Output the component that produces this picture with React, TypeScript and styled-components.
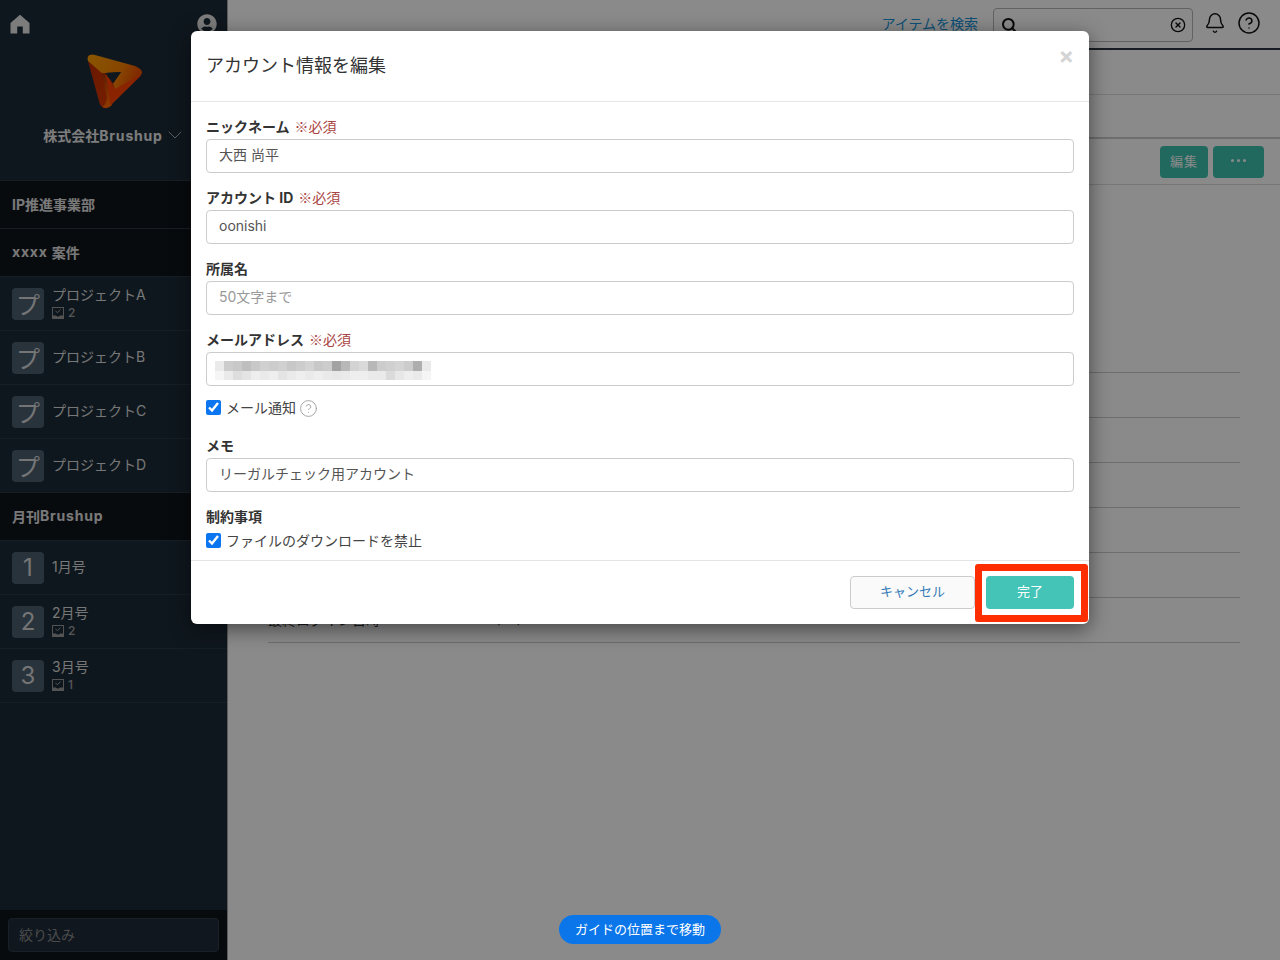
import React from "react";
import styled, { createGlobalStyle } from "styled-components";
import { Bell, CircleHelp, Search, CircleX, ChevronDown } from "lucide-react";
import { FaUserCircle } from "react-icons/fa";

const Global = createGlobalStyle`
  html, body { margin: 0; padding: 0; background: #fff; }
  body { font-family: Inter, "Noto Sans CJK JP", sans-serif; font-size: 14px; color: #333; }
  * { box-sizing: border-box; }
`;

const Page = styled.div`
  position: relative;
  display: grid;
  grid-template-columns: 227px 1fr;
  width: 1280px;
  height: 960px;
  overflow: hidden;
  background: #fff;
`;

const Sidebar = styled.aside`
  display: flex;
  flex-direction: column;
  height: 960px;
  background: #1d2c39;
  color: #ececec;
`;

const Company = styled.div`
  height: 180px;
  display: flex;
  flex-direction: column;
  align-items: center;
  flex: none;
`;

const TopIcons = styled.div`
  width: 100%;
  height: 48px;
  display: flex;
  align-items: center;
  justify-content: space-between;
  padding: 0 10px;
  color: #e6e6e6;
`;

const LogoSvg = styled.svg`
  flex: none;
  margin: 6px 0 0 3px;
`;

const CompanyName = styled.div`
  margin-top: 13px;
  padding-left: 3px;
  height: 24px;
  display: flex;
  align-items: center;
  font-size: 14px;
  font-weight: 700;
  color: #e8e8e8;
`;

const Latin = styled.span`
  letter-spacing: 0.8px;
`;

const Group = styled.div`
  height: 48px;
  flex: none;
  display: flex;
  align-items: center;
  padding: 0 12px 2px;
  background: #10151b;
  border-top: 1px solid #2c3a46;
  font-size: 14px;
  font-weight: 700;
  color: #e0e0e0;
  white-space: pre;
`;

const Item = styled.div`
  height: 54px;
  flex: none;
  display: flex;
  align-items: center;
  gap: 8px;
  padding: 0 12px;
  border-top: 1px solid #2b3a47;
`;

const Tile = styled.div`
  width: 32px;
  height: 32px;
  flex: none;
  display: flex;
  align-items: center;
  justify-content: center;
  border-radius: 4px;
  background: #4a5f70;
  font-size: 24px;
  color: #d8d8d8;
`;

const ItemText = styled.div`
  display: flex;
  flex-direction: column;
`;

const ItemName = styled.div`
  font-size: 14px;
  line-height: 18px;
  padding-bottom: 2px;
  color: #dcdcdc;
`;

const ItemMeta = styled.div`
  display: flex;
  align-items: center;
  gap: 4px;
  margin-bottom: 2px;
  font-size: 12px;
  font-weight: 500;
  line-height: 14px;
  color: #a0a0a0;
`;

const ListEnd = styled.div`
  border-top: 1px solid #2b3a47;
  flex: 1;
`;

const FilterBar = styled.div`
  height: 50px;
  flex: none;
  padding: 8px;
  background: #10151b;
`;

const Filter = styled.div`
  height: 34px;
  display: flex;
  align-items: center;
  padding: 0 10px 2px;
  border: 1px solid #2f3b47;
  border-radius: 4px;
  background: #1f2c3a;
  color: #8a8a8a;
  font-size: 14px;
`;

const Main = styled.main`
  display: flex;
  flex-direction: column;
  min-width: 0;
  border-left: 1px solid #aaa;
`;

const Header = styled.header`
  height: 50px;
  flex: none;
  display: flex;
  align-items: flex-start;
  justify-content: flex-end;
  padding: 8px 19px 0 0;
  border-bottom: 2px solid #2b3640;
  color: #111;
`;

const SearchLink = styled.a`
  margin: 6px 15px 0 0;
  color: #1593d8;
  font-size: 14px;
  line-height: 20px;
`;

const SearchBox = styled.div`
  width: 200px;
  height: 34px;
  display: flex;
  align-items: center;
  justify-content: space-between;
  padding: 0 6px 0 7px;
  border: 1px solid #b5b5b5;
  border-radius: 4px;
`;

const HeaderIcons = styled.div`
  display: flex;
  align-items: center;
  gap: 11px;
  height: 30px;
  margin-left: 11px;
`;

const Strip = styled.div<{ $h: number; $dark?: boolean }>`
  height: ${(p) => p.$h}px;
  flex: none;
  display: flex;
  align-items: center;
  justify-content: flex-end;
  gap: 5px;
  padding-right: 16px;
  border-bottom: ${(p) => (p.$dark ? "2px solid #ccc" : "1px solid #ddd")};
`;

const TealButton = styled.div<{ $w: number }>`
  width: ${(p) => p.$w}px;
  height: 32px;
  display: flex;
  align-items: center;
  justify-content: center;
  gap: 3px;
  padding-bottom: 2px;
  border-radius: 4px;
  background: #3dc2b0;
  color: #fff;
  font-size: 13px;
  letter-spacing: 1px;
`;

const Dot = styled.span`
  width: 3px;
  height: 3px;
  border-radius: 50%;
  background: #fff;
`;

const Details = styled.div`
  margin: 143px 40px 0 40px;
`;

const DetailRow = styled.div`
  height: 45px;
  display: grid;
  grid-template-columns: 195px 1fr;
  align-items: center;
  padding-bottom: 3px;
  border-bottom: 1px solid #ccc;
  font-size: 14px;
`;

const Backdrop = styled.div`
  position: absolute;
  inset: 0;
  background: rgba(0, 0, 0, 0.46);
`;

const Modal = styled.div`
  position: absolute;
  left: 191px;
  top: 31px;
  width: 898px;
  height: 593px;
  display: flex;
  flex-direction: column;
  border-radius: 6px;
  background: #fff;
  box-shadow: 0 5px 20px rgba(0, 0, 0, 0.5);
`;

const ModalHead = styled.div`
  height: 71px;
  flex: none;
  display: flex;
  align-items: center;
  justify-content: space-between;
  padding: 0 15px;
  border-bottom: 1px solid #e5e5e5;
`;

const ModalTitle = styled.h4`
  margin: 0 0 1px;
  font-size: 18px;
  font-weight: 400;
  line-height: 26px;
  color: #333;
`;

const Close = styled.span`
  margin: 0 0 20px;
  color: #d4d4d4;
  font-size: 23px;
  font-weight: 700;
  line-height: 1;
`;

const ModalBody = styled.div`
  flex: 1;
  padding: 15px 15px 0;
`;

const Field = styled.div`
  margin-bottom: 15px;
`;

const Label = styled.div`
  height: 20px;
  margin-bottom: 2px;
  font-size: 14px;
  font-weight: 700;
  line-height: 19px;
  color: #333;
`;

const Required = styled.span`
  margin-left: 5px;
  font-family: "Noto Sans CJK JP", sans-serif;
  color: #a94442;
  font-weight: 400;
`;

const InputWrap = styled.div`
  position: relative;
`;

const Input = styled.input`
  display: block;
  width: 100%;
  height: 34px;
  padding: 0 12px 4px;
  border: 1px solid #ccc;
  border-radius: 4px;
  background: #fff;
  color: #555;
  font: inherit;
  font-size: 14px;
  outline: none;
  &::placeholder { color: #999; opacity: 1; }
`;

const Mosaic = styled.svg`
  position: absolute;
  left: 9px;
  top: 7px;
`;

const CheckRow = styled.label<{ $top: number; $bottom?: number }>`
  height: 20px;
  display: flex;
  align-items: center;
  gap: 5px;
  margin: ${(p) => p.$top}px 0 ${(p) => p.$bottom ?? 0}px;
  color: #444;
  font-size: 14px;
`;

const CheckText = styled.span`
  padding-bottom: 3px;
`;

const Check = styled.input`
  width: 15px;
  height: 15px;
  margin: -1px 0 0;
  accent-color: #0b76ef;
`;

const ModalFoot = styled.div`
  height: 64px;
  flex: none;
  display: flex;
  justify-content: flex-end;
  gap: 11px;
  padding: 15px 15px 0;
  border-top: 1px solid #e5e5e5;
`;

const Cancel = styled.button`
  width: 125px;
  height: 33px;
  padding: 0 0 4px;
  border: 1px solid #ccc;
  border-radius: 4px;
  background: #fafafa;
  color: #337ab7;
  font: inherit;
  font-size: 13px;
`;

const Done = styled.button`
  width: 88px;
  height: 33px;
  padding: 0 0 4px;
  border: 0;
  border-radius: 4px;
  background: #43c4b7;
  color: #fff;
  font: inherit;
  font-size: 13px;
`;

const Highlight = styled.div`
  position: absolute;
  left: 975px;
  top: 564px;
  width: 113px;
  height: 58px;
  border: 7px solid #ff2e00;
  border-radius: 3px;
`;

const GuideButton = styled.div`
  position: absolute;
  left: 559px;
  top: 915px;
  width: 162px;
  height: 29px;
  display: flex;
  align-items: center;
  justify-content: center;
  padding-bottom: 2px;
  border-radius: 15px;
  background: #0b76ea;
  color: #fff;
  font-size: 13px;
`;

const HomeIcon = () => (
  <svg width="20" height="20" viewBox="0 0 20 20" fill="currentColor">
    <path d="M10 .8 19.5 9 V19.5 H12.8 V12.6 H7.2 V19.5 H.5 V9 Z" />
  </svg>
);

const TaskIcon = () => (
  <svg width="12" height="12" viewBox="0 0 12 12" fill="none" stroke="#9a9a9a" strokeWidth="1">
    <rect x=".5" y=".5" width="11" height="11" />
    <path d="M3.5 3.8 5.4 5.8 8.5 2.6" />
    <path d="M.5 9 H4 L5 10 H7 L8 9 H11.5 V11.5 H.5 Z" fill="#9a9a9a" />
  </svg>
);

const Logo = () => (
  <LogoSvg width="58" height="56" viewBox="0 0 58 56">
    <defs>
      <linearGradient id="lgTop" x1="0" y1="0" x2="1" y2="0.3">
        <stop offset="0" stopColor="#ffa000" />
        <stop offset="0.7" stopColor="#f88000" />
        <stop offset="1" stopColor="#ee5000" />
      </linearGradient>
      <linearGradient id="lgLeft" x1="0" y1="0" x2="0.5" y2="1">
        <stop offset="0" stopColor="#c42c00" />
        <stop offset="1" stopColor="#d83800" />
      </linearGradient>
      <linearGradient id="lgWall" x1="0" y1="0" x2="0.3" y2="1">
        <stop offset="0" stopColor="#a83000" />
        <stop offset="1" stopColor="#ff6a00" />
      </linearGradient>
    </defs>
    <path d="M2 7 L13.5 49 Q15.5 55 21 54 Q24 53 26 51 L30 30 L16 18 Z" fill="url(#lgLeft)" />
    <path d="M15.7 18.5 L19.5 18.5 L25.5 51.5 Q21 55.5 16.5 53 Q20 50 21 44 Z" fill="url(#lgWall)" />
    <path d="M19.5 18.5 L24.5 51.5 L54.5 22 Q57 18 54 15 L28 34 Z" fill="#ff4400" />
    <path d="M2 7 Q.5 2 4 1 Q6 .2 9 1 L49 12 Q57 15 55.5 20 L29 35 L27 29.5 L35 18 L19.5 19 L15.7 19 Z" fill="url(#lgTop)" />
    <path d="M19.5 19 L35 18 L27 29.5 Z" fill="#1d2c39" />
  </LogoSvg>
);

const rowA = [0.12, 0.3, 0.32, 0.38, 0.32, 0.28, 0.3, 0.28, 0.33, 0.3, 0.26, 0.32, 0.3, 0.55, 0.42, 0.26, 0.22, 0.42, 0.3, 0.28, 0.25, 0.3, 0.48, 0.12];
const rowB = [0.06, 0.12, 0.2, 0.16, 0.1, 0.12, 0.1, 0.16, 0.12, 0.1, 0.12, 0.1, 0.12, 0.14, 0.12, 0.1, 0.1, 0.12, 0.12, 0.22, 0.14, 0.1, 0.12, 0.06];

const EmailMosaic = () => (
  <Mosaic width="220" height="22" viewBox="0 0 220 22">
    {rowA.map((a, i) => (
      <rect key={`a${i}`} x={i * 9} y={2} width={9} height={10} fill="#555" opacity={a} />
    ))}
    {rowB.map((a, i) => (
      <rect key={`b${i}`} x={i * 9} y={12} width={9} height={9} fill="#555" opacity={a} />
    ))}
  </Mosaic>
);

const projects: [string, string, string?][] = [
  ["プ", "プロジェクトA", "2"],
  ["プ", "プロジェクトB"],
  ["プ", "プロジェクトC"],
  ["プ", "プロジェクトD"],
];
const issues: [string, string, string?][] = [
  ["1", "1月号"],
  ["2", "2月号", "2"],
  ["3", "3月号", "1"],
];

const Row = ({ data }: { data: [string, string, string?] }) => (
  <Item>
    <Tile>{data[0]}</Tile>
    <ItemText>
      <ItemName>{data[1]}</ItemName>
      {data[2] && (
        <ItemMeta>
          <TaskIcon />
          {data[2]}
        </ItemMeta>
      )}
    </ItemText>
  </Item>
);

export default function App() {
  return (
    <Page>
      <Global />
      <Sidebar>
        <Company>
          <TopIcons>
            <HomeIcon />
            <FaUserCircle size={20} />
          </TopIcons>
          <Logo />
          <CompanyName>
            株式会社<Latin>Brushup</Latin>
            <ChevronDown size={24} strokeWidth={1} color="#b0b0b0" />
          </CompanyName>
        </Company>
        <Group>IP推進事業部</Group>
        <Group>
          <Latin>xxxx </Latin>案件
        </Group>
        {projects.map((p) => (
          <Row key={p[1]} data={p} />
        ))}
        <Group>
          月刊<Latin>Brushup</Latin>
        </Group>
        {issues.map((p) => (
          <Row key={p[1]} data={p} />
        ))}
        <ListEnd />
        <FilterBar>
          <Filter>絞り込み</Filter>
        </FilterBar>
      </Sidebar>
      <Main>
        <Header>
          <SearchLink>アイテムを検索</SearchLink>
          <SearchBox>
            <Search size={16} strokeWidth={3} />
            <CircleX size={16} strokeWidth={2} />
          </SearchBox>
          <HeaderIcons>
            <Bell size={22} strokeWidth={1.6} />
            <CircleHelp size={24} strokeWidth={1.5} />
          </HeaderIcons>
        </Header>
        <Strip $h={45} />
        <Strip $h={44} $dark />
        <Strip $h={46}>
          <TealButton $w={48}>編集</TealButton>
          <TealButton $w={51}>
            <Dot />
            <Dot />
            <Dot />
          </TealButton>
        </Strip>
        <Details>
          {Array.from({ length: 6 }).map((_, i) => (
            <DetailRow key={i} />
          ))}
          <DetailRow>
            <span>最終ログイン日時</span>
            <span>2020/10/28 14:57</span>
          </DetailRow>
        </Details>
      </Main>
      <Backdrop />
      <Modal>
        <ModalHead>
          <ModalTitle>アカウント情報を編集</ModalTitle>
          <Close>×</Close>
        </ModalHead>
        <ModalBody>
          <Field>
            <Label>
              ニックネーム<Required>※必須</Required>
            </Label>
            <Input readOnly defaultValue="大西 尚平" />
          </Field>
          <Field>
            <Label>
              アカウント ID<Required>※必須</Required>
            </Label>
            <Input readOnly defaultValue="oonishi" />
          </Field>
          <Field>
            <Label>所属名</Label>
            <Input readOnly placeholder="50文字まで" />
          </Field>
          <Label>
            メールアドレス<Required>※必須</Required>
          </Label>
          <InputWrap>
            <Input readOnly />
            <EmailMosaic />
          </InputWrap>
          <CheckRow $top={12} $bottom={18}>
            <Check type="checkbox" readOnly checked />
            <CheckText>メール通知</CheckText>
            <CircleHelp size={19} strokeWidth={1.1} color="#999" style={{ margin: "1px 0 0 -2px" }} />
          </CheckRow>
          <Field>
            <Label>メモ</Label>
            <Input readOnly defaultValue="リーガルチェック用アカウント" />
          </Field>
          <Label>制約事項</Label>
          <CheckRow $top={4}>
            <Check type="checkbox" readOnly checked />
            <CheckText>ファイルのダウンロードを禁止</CheckText>
          </CheckRow>
        </ModalBody>
        <ModalFoot>
          <Cancel>キャンセル</Cancel>
          <Done>完了</Done>
        </ModalFoot>
      </Modal>
      <Highlight />
      <GuideButton>ガイドの位置まで移動</GuideButton>
    </Page>
  );
}
